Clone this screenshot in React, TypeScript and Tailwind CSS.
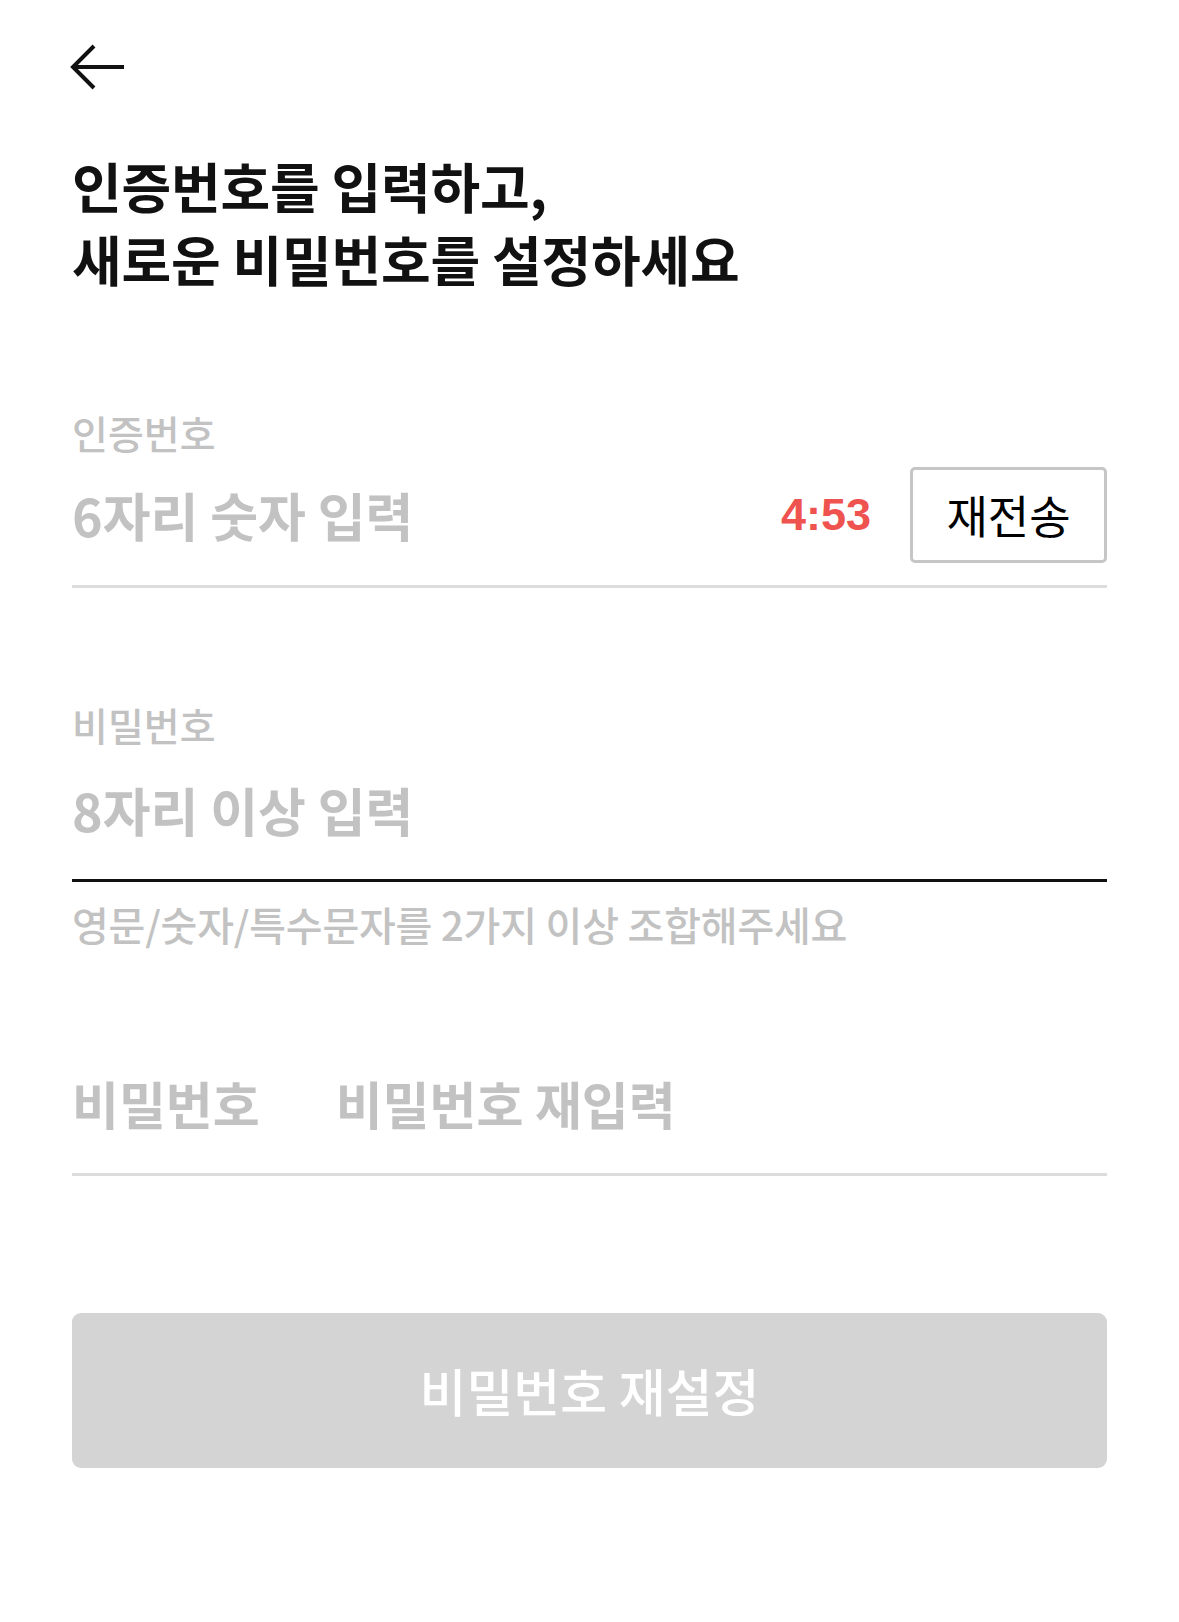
const KR = "font-['Noto_Sans_CJK_KR','Noto_Sans',sans-serif]";

const BackArrow = () => (
  <svg width="58" height="46" viewBox="0 0 58 46" fill="none" stroke="#111" strokeWidth="4" strokeLinecap="butt" strokeLinejoin="miter">
    <path d="M55 23H5" />
    <path d="M25 2L4 23L25 44" />
  </svg>
);

export default function App() {
  return (
    <div className={`min-h-screen bg-white px-[72px] ${KR}`}>
      {/* Header */}
      <div className="pt-[44px] -ml-[3px]">
        <BackArrow />
      </div>

      <h1 className="mt-[59px] text-[54px] leading-[73px] font-bold text-[#111] tracking-[-0.2px]">
        인증번호를 입력하고,
        <br />
        새로운 비밀번호를 설정하세요
      </h1>

      {/* 인증번호 */}
      <p className="mt-[117px] text-[39px] leading-[40px] font-medium text-[#c2c2c2]">인증번호</p>
      <div className="mt-[15px] h-[96px] flex items-center">
        <span className="flex-1 text-[52px] font-semibold text-[#c2c2c2]">6자리 숫자 입력</span>
        <span className="mr-[39px] font-['Liberation_Sans',sans-serif] text-[45px] font-bold text-[#ef5350]">4:53</span>
        <button className="w-[197px] h-[96px] rounded-[5px] border-[3px] border-[#c6c6c6] bg-white text-[45px] text-black">
          재전송
        </button>
      </div>
      <div className="mt-[22px] h-[3px] bg-[#dddddd]" />

      {/* 비밀번호 */}
      <p className="mt-[116px] text-[39px] leading-[40px] font-medium text-[#c2c2c2]">비밀번호</p>
      <div className="mt-[18px] h-[96px] flex items-center">
        <span className="text-[52px] font-semibold text-[#c2c2c2]">8자리 이상 입력</span>
      </div>
      <div className="mt-[21px] h-[3px] bg-[#111]" />
      <p className="mt-[20px] text-[40px] leading-[44px] font-medium text-[#c2c2c2] tracking-[-0.2px]">
        영문/숫자/특수문자를 2가지 이상 조합해주세요
      </p>

      {/* 비밀번호 재입력 */}
      <div className="mt-[109px] h-[96px] flex items-center gap-[76px] text-[51px] font-semibold text-[#c2c2c2]">
        <span>비밀번호</span>
        <span>비밀번호 재입력</span>
      </div>
      <div className="mt-[22px] h-[3px] bg-[#dddddd]" />

      <button className="mt-[137px] w-full h-[155px] rounded-[9px] bg-[#d4d4d4] text-[51px] font-medium text-white">
        비밀번호 재설정
      </button>
    </div>
  );
}
